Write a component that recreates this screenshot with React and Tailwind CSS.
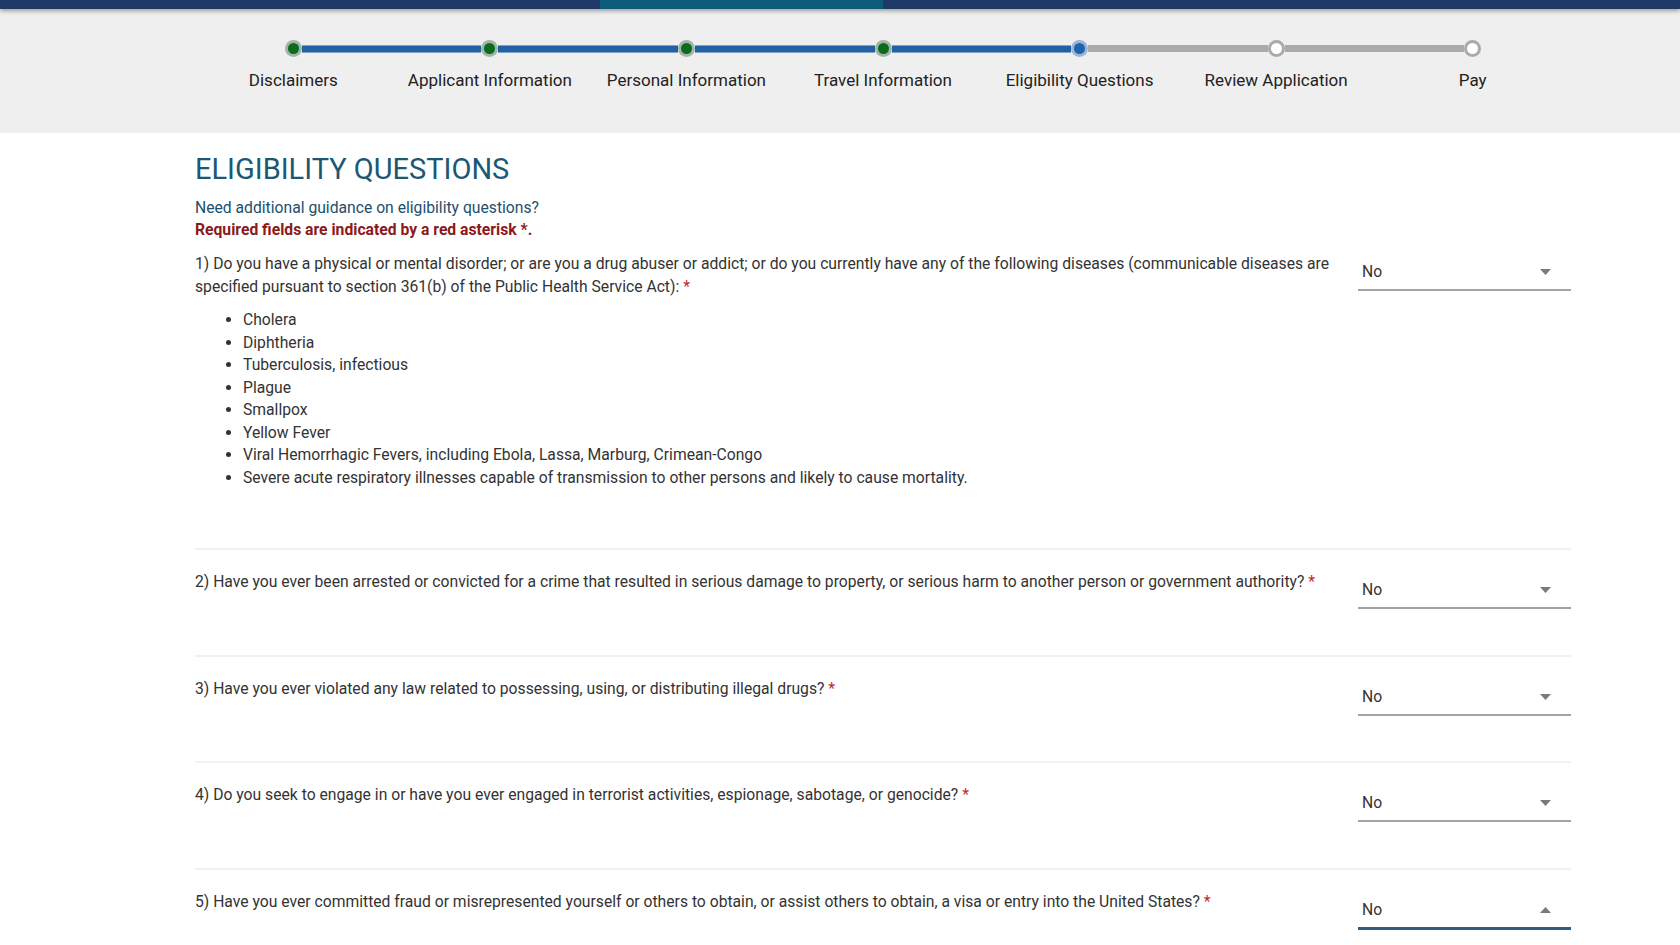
import React from 'react';

const steps = [
  'Disclaimers',
  'Applicant Information',
  'Personal Information',
  'Travel Information',
  'Eligibility Questions',
  'Review Application',
  'Pay',
];
const current = 4;

const diseases = [
  'Cholera',
  'Diphtheria',
  'Tuberculosis, infectious',
  'Plague',
  'Smallpox',
  'Yellow Fever',
  'Viral Hemorrhagic Fevers, including Ebola, Lassa, Marburg, Crimean-Congo',
  'Severe acute respiratory illnesses capable of transmission to other persons and likely to cause mortality.',
];

const questions = [
  '2) Have you ever been arrested or convicted for a crime that resulted in serious damage to property, or serious harm to another person or government authority?',
  '3) Have you ever violated any law related to possessing, using, or distributing illegal drugs?',
  '4) Do you seek to engage in or have you ever engaged in terrorist activities, espionage, sabotage, or genocide?',
  '5) Have you ever committed fraud or misrepresented yourself or others to obtain, or assist others to obtain, a visa or entry into the United States?',
];

const Segment = ({ kind }) => {
  if (kind === 'none') return <div className="flex-1 h-[8px]" />;
  if (kind === 'done')
    return <div className="flex-1 h-[8px] bg-[#2062a4] border-y border-[#7fa3c8]" />;
  return <div className="flex-1 h-[7px] bg-[#aaaaaa]" />;
};

const Dot = ({ i }) => {
  if (i < current)
    return (
      <div className="w-[17px] h-[17px] rounded-full bg-[#a2b4a6] flex items-center justify-center shrink-0">
        <div className="w-[11px] h-[11px] rounded-full bg-[#0c6a1f]" />
      </div>
    );
  if (i === current)
    return (
      <div className="w-[17px] h-[17px] rounded-full bg-[#9bb6d2] flex items-center justify-center shrink-0">
        <div className="w-[11px] h-[11px] rounded-full bg-[#1d64ad]" />
      </div>
    );
  return (
    <div className="w-[17px] h-[17px] rounded-full bg-[#aaaaaa] flex items-center justify-center shrink-0">
      <div className="w-[11px] h-[11px] rounded-full bg-white" />
    </div>
  );
};

const Select = ({ open }) => (
  <div
    className={
      open
        ? 'w-[213px] h-[39px] shrink-0 self-start flex items-center justify-between pt-[2px] pl-[4px] pr-[20px] border-b-[3px] border-[#2b5f87]'
        : 'w-[213px] h-[38px] shrink-0 self-start flex items-center justify-between pt-[2px] pl-[4px] pr-[20px] border-b-2 border-[#a3a3a3]'
    }
  >
    <span className="text-[15.7px] text-[#333333]">No</span>
    <svg width="11" height="6" viewBox="0 0 11 6">
      {open ? (
        <path d="M0 6 L5.5 0 L11 6 Z" fill="#7a7a7a" />
      ) : (
        <path d="M0 0 L11 0 L5.5 6 Z" fill="#7a7a7a" />
      )}
    </svg>
  </div>
);

const Req = () => <span className="text-[#c1272d]"> *</span>;

export default function App() {
  return (
    <div className="min-h-screen bg-white font-['Roboto','Liberation_Sans',sans-serif] text-[#333333] overflow-hidden">
      {/* top brand bar */}
      <div className="relative z-10 flex h-[9px] shadow-[0_2px_4px_rgba(0,0,0,0.35)]">
        <div className="w-[600px] bg-[#1f3a66]" />
        <div className="w-[283px] bg-[#0d5b7b]" />
        <div className="flex-1 bg-[#1f3a66]" />
      </div>

      {/* stepper */}
      <div className="bg-[#efefef] h-[124px] pt-[31px]">
        <div className="ml-[195px] w-[1376px] grid grid-cols-7">
          {steps.map((s, i) => {
            const left = i === 0 ? 'none' : i <= current ? 'done' : 'todo';
            const right = i === steps.length - 1 ? 'none' : i < current ? 'done' : 'todo';
            return (
              <div key={s} className="flex flex-col items-center">
                <div className="flex items-center w-full h-[17px]">
                  <Segment kind={left} />
                  <Dot i={i} />
                  <Segment kind={right} />
                </div>
                <div className="mt-[13px] text-[17px] leading-[20px] text-[#222222]">{s}</div>
              </div>
            );
          })}
        </div>
      </div>

      {/* content */}
      <div className="ml-[195px] w-[1376px] pt-[19px]">
        <h1 className="text-[29px] leading-[34px] text-[#1a5873] font-normal">ELIGIBILITY QUESTIONS</h1>
        <div className="mt-[11px] text-[15.7px] leading-[22px]">
          <div className="text-[#1d4f6c]">Need additional guidance on eligibility questions?</div>
          <div className="text-[#8b1a1a] font-bold">Required fields are indicated by a red asterisk *.</div>
        </div>

        <div className="mt-[12px] flex gap-[12px]">
          <div className="flex-1 text-[15.7px] leading-[22.5px] pb-[59px]">
            <p>
              1) Do you have a physical or mental disorder; or are you a drug abuser or addict; or do you currently have any of the following diseases (communicable diseases are specified pursuant to section 361(b) of the Public Health Service Act):
              <Req />
            </p>
            <ul className="mt-[11px] pl-[48px] list-disc">
              {diseases.map((d) => (
                <li key={d}>{d}</li>
              ))}
            </ul>
          </div>
          <Select />
        </div>

        {questions.map((q, i) => (
          <div key={q} className="flex gap-[12px] border-t-2 border-[#f1f1f1] pt-[21px]">
            <p className="flex-1 text-[15.7px] leading-[22.5px] pb-[61px]">
              {q}
              <Req />
            </p>
            <Select open={i === questions.length - 1} />
          </div>
        ))}
      </div>
    </div>
  );
}
